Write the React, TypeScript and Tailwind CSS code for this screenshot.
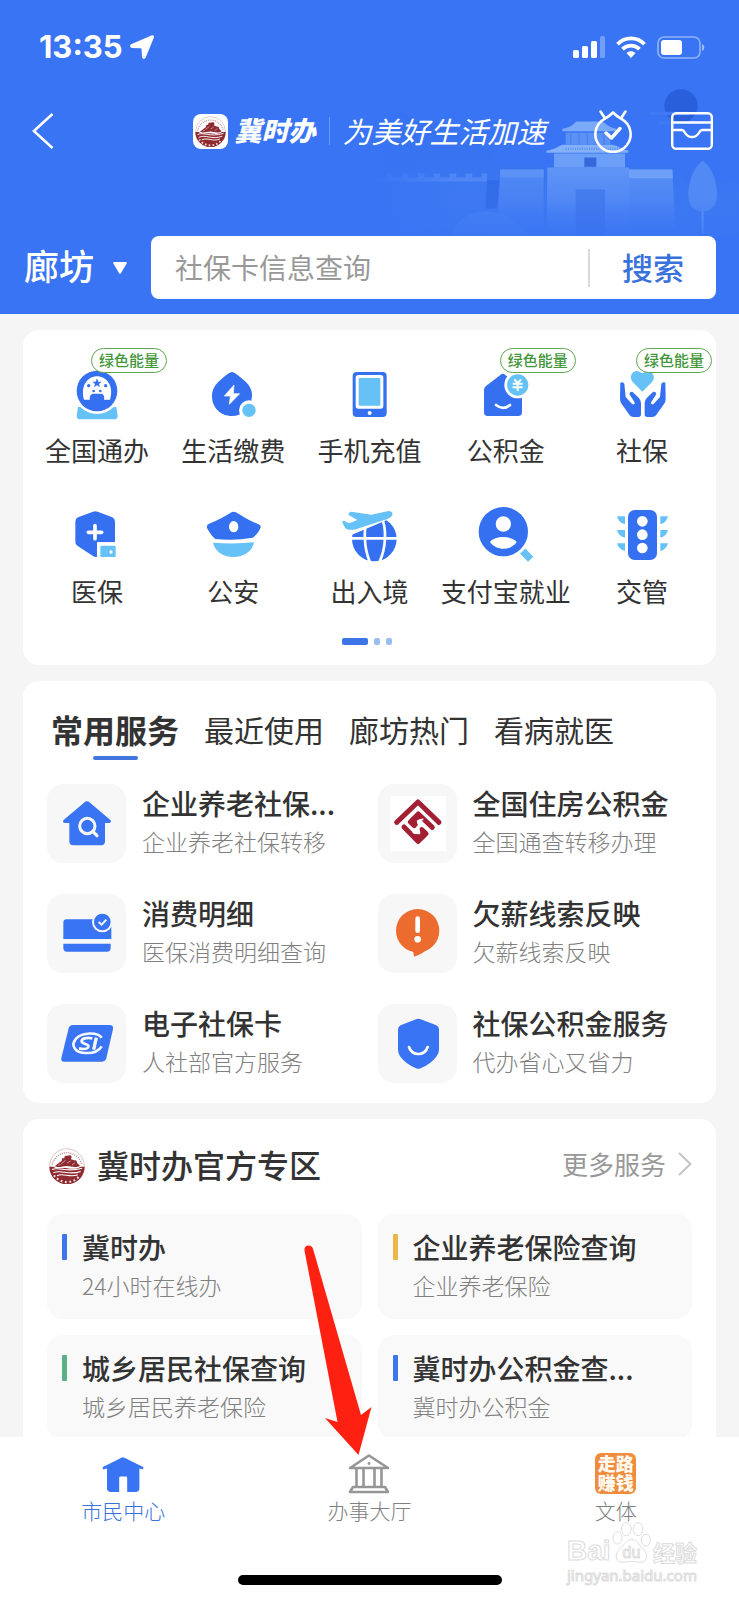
import React from 'react';

const BLUE = '#3470f0';
const SKY = '#66c1f7';

const Seal: React.FC<{ className?: string }> = ({ className }) => (
  <svg viewBox="0 0 100 100" className={className} aria-hidden="true">
    <circle cx="50" cy="50" r="48" fill="#fff" stroke="#cfaeb0" strokeWidth="2" />
    <path d="M9 46 A42 42 0 0 1 91 46" fill="none" stroke="#c09497" strokeWidth="4" strokeDasharray="3 3" />
    <path d="M1 52 A49 49 0 0 0 99 52 L88 52 C76 60 62 58 50 56 C36 54 22 60 12 52 Z" fill="#8e2a30" />
    <path d="M16 51 L27 42 L35 36 L37 28 L42 29 L44 22 L60 20 L63 25 L61 31 L70 34 L76 35 L79 43 L86 49 C74 57 60 50 50 50 C38 50 28 56 16 51 Z" fill="#8e2a30" />
    <path d="M34 44 L46 34 M50 42 L60 36 M64 47 L72 41 M26 48 L32 46" stroke="#e9cdce" strokeWidth="2" fill="none" />
    <path d="M8 60 C28 50 48 70 92 56 M12 69 C34 58 54 78 88 65 M22 77 C40 68 58 84 80 74" stroke="#fff" strokeWidth="3" fill="none" />
    <path d="M14 76 A44 44 0 0 0 86 76" stroke="#f1dcdc" strokeWidth="6" strokeDasharray="5 7" fill="none" />
  </svg>
);

const Skyline = () => (
  <svg viewBox="0 240 1110 470" className="absolute right-0 top-20 h-[157px] w-[370px]" aria-hidden="true">
    <defs>
      <linearGradient id="hill" x1="0" y1="0" x2="0" y2="1">
        <stop offset="0" stopColor="#3069ea" />
        <stop offset="1" stopColor="#4a83f5" />
      </linearGradient>
      <linearGradient id="wall" x1="0" y1="0" x2="0" y2="1">
        <stop offset="0" stopColor="#5f95f6" />
        <stop offset="1" stopColor="#4079f3" />
      </linearGradient>
      <linearGradient id="fade" x1="0" y1="0" x2="1" y2="0">
        <stop offset="0" stopColor="#3874f3" />
        <stop offset="1" stopColor="#3874f3" stopOpacity="0" />
      </linearGradient>
      <linearGradient id="ground" x1="0" y1="0" x2="0" y2="1">
        <stop offset="0" stopColor="#3874f3" stopOpacity="0" />
        <stop offset="1" stopColor="#3874f3" />
      </linearGradient>
    </defs>
    <circle cx="936" cy="317" r="50" fill="#2a5fdc" />
    <path d="M840 340 H960 M870 368 H930" stroke="#3f79f4" strokeWidth="11" />
    <path d="M0 400 C30 330 110 310 150 370 C210 350 250 380 290 420 C330 400 360 440 390 500 H920 L960 560 C1010 530 1070 540 1110 550 V710 H0 Z" fill="url(#hill)" opacity="0.45" />
    <path d="M0 522 H14 V532 H50 V520 H68 V532 H98 V520 H118 V532 H146 V520 H166 V532 H194 V520 H214 V532 H242 V520 H262 V532 H290 V520 H310 V532 H338 V520 H354 V545 H0 Z" fill="#5087f5" />
    <path d="M0 545 H354 V710 H0 Z" fill="#4079f3" opacity="0.6" />
    <path d="M354 540 H392 L384 625 H350 Z" fill="#2f68e6" opacity="0.7" />
    <path d="M394 508 H524 V710 H384 Z" fill="url(#wall)" opacity="0.6" />
    <path d="M394 508 H524 V532 H392 Z" fill="#6599f6" opacity="0.6" />
    <path d="M270 665 C320 615 420 620 480 710 H240 Z" fill="#4a82f5" opacity="0.8" />
    <path d="M0 630 C40 640 60 670 70 710 H0 Z" fill="#3e78f3" />
    <path d="M780 508 H910 L920 710 H780 Z" fill="url(#wall)" opacity="0.8" />
    <path d="M780 508 H910 L912 534 H780 Z" fill="#74a5f8" opacity="0.8" />
    <path d="M535 502 H780 V710 H533 Z" fill="url(#wall)" />
    <path d="M620 568 H708 V710 H620 Z" fill="#3a72e8" opacity="0.6" />
    <path d="M555 460 H768 V502 H555 Z" fill="#6c9ff7" />
    <path d="M646 472 H682 V500 H646 Z" fill="#3668dc" />
    <path d="M532 452 C560 448 572 436 580 434 H730 C745 436 758 448 778 451 V458 H532 Z" fill="#83b0f9" />
    <path d="M590 398 H724 V434 H590 Z" fill="#5b90f4" />
    <path d="M580 386 C604 382 614 372 622 364 H700 C712 372 722 382 742 386 V393 H580 Z" fill="#7baaf8" />
    <path d="M605 434 V400 M630 434 V400 M655 434 V400 M680 434 V400 M705 434 V400" stroke="#4b82f0" strokeWidth="4" />
    <path d="M590 446 H765" stroke="#5d92f2" strokeWidth="7" strokeDasharray="3 4" />
    <path d="M1001 482 C1030 500 1046 550 1044 590 C1042 622 1022 634 1001 634 C978 634 960 620 958 590 C956 550 974 500 1001 482 Z" fill="#5189f5" />
    <path d="M1001 632 V700" stroke="#5f95f6" strokeWidth="6" />
    <rect y="240" width="260" height="470" fill="url(#fade)" />
    <rect y="600" width="1110" height="110" fill="url(#ground)" opacity="0.7" />
  </svg>
);

const StatusBar = () => (
  <div className="flex h-[94px] items-center justify-between pl-[39px] pr-[34px] text-white">
    <div className="flex items-center gap-[7px]">
      <span className="font-['Inter'] text-[31px] font-bold leading-9">13:35</span>
      <svg viewBox="0 0 24 24" className="h-6 w-6" fill="currentColor" aria-hidden="true">
        <path d="M21.4 0.4 C23.3 -0.2 24.4 1 23.8 2.8 L15.8 22.2 C15 24.5 12.2 24.3 12 22 L11.6 14.4 Q11.5 13.3 10.4 13.2 L2 12.9 C-0.3 12.6 -0.6 9.8 1.7 9 Z" />
      </svg>
    </div>
    <div className="flex items-center gap-[11px]">
      <svg viewBox="0 0 32 22" className="h-[22px] w-8" fill="currentColor" aria-hidden="true">
        <rect x="0" y="14" width="6" height="8" rx="1.6" />
        <rect x="9" y="10" width="6" height="12" rx="1.6" />
        <rect x="18" y="5" width="6" height="17" rx="1.6" />
        <rect x="27" y="0" width="5" height="22" rx="1.6" opacity="0.3" />
      </svg>
      <svg viewBox="0 0 30 22" className="h-[22px] w-[30px]" aria-hidden="true">
        <g fill="none" stroke="currentColor" strokeWidth="3.8">
          <path d="M1.5 8.2 C9 0.4 21 0.4 28.5 8.2" />
          <path d="M6.5 13.2 C11.5 8.4 18.5 8.4 23.5 13.2" />
        </g>
        <path d="M10.5 17 C13 14.7 17 14.7 19.5 17 L15 22 Z" fill="currentColor" />
      </svg>
      <svg viewBox="0 0 48 23" className="h-[23px] w-12" aria-hidden="true">
        <rect x="1" y="1" width="42" height="21" rx="6" fill="none" stroke="currentColor" strokeWidth="1.6" opacity="0.45" />
        <rect x="4" y="4" width="21" height="15" rx="3" fill="currentColor" />
        <path d="M45 8 C48 9 48 14 45 15 Z" fill="currentColor" opacity="0.5" />
      </svg>
    </div>
  </div>
);

const Header = () => (
  <header className="relative bg-[#3874f3] pb-[15px] text-white">
    <Skyline />
    <div className="relative">
      <StatusBar />
      <div className="grid h-[74px] grid-cols-[1fr_auto_1fr] items-center">
        <button aria-label="返回" className="ml-8 w-[22px]">
          <svg viewBox="0 0 22 36" className="h-9 w-[22px]" fill="none" stroke="currentColor" strokeWidth="2.6">
            <path d="M20.5 1 L1.8 18 L20.5 35" />
          </svg>
        </button>
        <div className="flex items-center">
          <span className="rounded-lg bg-white p-[2px]">
            <Seal className="h-[31px] w-[31px]" />
          </span>
          <span className="ml-[6px] pb-[2px] text-[27px] font-black italic leading-9">冀时办</span>
          <span className="ml-[14px] mr-3 h-7 w-px bg-[#6f9bf6]" />
          <span className="pb-[2px] text-[29px] italic leading-9">为美好生活加速</span>
        </div>
        <div className="flex items-center justify-end gap-[38px] pr-[26px]">
          <button aria-label="任务">
            <svg viewBox="0 0 40 44" className="h-11 w-10" fill="none" stroke="currentColor" strokeWidth="2.6" strokeLinecap="round" strokeLinejoin="round">
              <path d="M20 3.5 C17 6.5 14.6 8.2 11.6 9.8 A17.6 17.6 0 1 0 28.4 9.8 C25.4 8.2 23 6.5 20 3.5 Z" />
              <path d="M7.5 2.5 L11.5 8.5 M32.5 2.5 L28.5 8.5" />
              <path d="M13 24 L18.5 29 L27 19.5" strokeWidth="3.4" />
            </svg>
          </button>
          <button aria-label="卡包">
            <svg viewBox="0 0 42 38" className="h-[38px] w-[42px]" fill="none" stroke="currentColor" strokeWidth="2.4" strokeLinejoin="round">
              <rect x="1.2" y="1.2" width="39.6" height="35.6" rx="4" />
              <path d="M1.2 10.5 H40.8 M1.2 18 H11 C14.5 18 13.5 25 21 25 C28.5 25 27.5 18 31 18 H40.8" />
            </svg>
          </button>
        </div>
      </div>
      <div className="mr-[23px] mt-[68px] flex h-[63px] items-center pl-6">
        <label className="relative flex items-center">
          <select aria-label="城市" className="w-[103px] appearance-none bg-transparent pb-[6px] text-[35px] font-medium leading-[50px] outline-none">
            <option>廊坊</option>
          </select>
          <svg viewBox="0 0 14 12" className="pointer-events-none absolute right-0 h-3 w-[14px]" fill="currentColor">
            <path d="M0.8 0 H13.2 Q14.2 0.3 13.6 1.4 L7.9 11.2 Q7 12.4 6.1 11.2 L0.4 1.4 Q-0.2 0.3 0.8 0 Z" />
          </svg>
        </label>
        <form className="ml-6 flex h-full min-w-0 flex-1 items-center rounded-lg bg-white" onSubmit={(e) => e.preventDefault()}>
          <input
            type="search"
            aria-label="搜索服务"
            placeholder="社保卡信息查询"
            className="h-full min-w-0 flex-1 bg-transparent pb-[2px] pl-6 text-[28px] text-[#333] outline-none placeholder:text-[#999]"
          />
          <span className="h-[38px] w-[2px] bg-[#d9d9d9]" />
          <button className="w-[126px] pb-[2px] text-[31px] font-medium leading-[44px] text-[#3a72dc]">搜索</button>
        </form>
      </div>
    </div>
  </header>
);

const quickServices = [
  {
    name: '全国通办',
    green: true,
    icon: (
      <svg viewBox="141 114 180 180">
        <path d="M174 246 H289 L293 272 Q293 283 282 283 H181 Q170 283 170 272 Z" fill={SKY} />
        <circle cx="231" cy="198" r="69" fill="#fff" />
        <circle cx="231" cy="198" r="61" fill={BLUE} />
        <path d="M192 224 C180 180 205 154 231 154 C257 154 284 180 270 224 H252 C254 216 252 208 244 206 H220 C210 208 208 216 210 224 Z" fill="#fff" />
        <path d="M231 160 L235 170 L245 170 L237 177 L240 187 L231 181 L222 187 L225 177 L217 170 L227 170 Z" fill={BLUE} />
        <circle cx="206" cy="182" r="5" fill={BLUE} />
        <circle cx="257" cy="182" r="5" fill={BLUE} />
        <circle cx="221" cy="198" r="4" fill={BLUE} />
        <circle cx="241" cy="198" r="4" fill={BLUE} />
      </svg>
    ),
  },
  {
    name: '生活缴费',
    icon: (
      <svg viewBox="549 114 180 180">
        <path d="M636 141 C642 141 655 151 672 166 C688 180 697 194 696 213 C694 250 668 273 636 273 C602 273 576 248 576 213 C576 192 586 178 602 164 C618 150 630 141 636 141 Z" fill={BLUE} />
        <path d="M642 180 L613 213 H631 L628 238 L659 206 H640 Z" fill="#fff" stroke="#fff" strokeWidth="2" strokeLinejoin="round" />
        <circle cx="687" cy="256" r="30" fill="#fff" />
        <circle cx="687" cy="256" r="20" fill={SKY} />
      </svg>
    ),
  },
  {
    name: '手机充值',
    icon: (
      <svg viewBox="957 114 180 180">
        <rect x="998" y="141" width="102" height="135" rx="12" fill={BLUE} />
        <rect x="1007" y="150" width="83" height="101" rx="8" fill="#fff" />
        <rect x="1016" y="159" width="65" height="83" rx="3" fill={SKY} />
        <circle cx="1049" cy="264" r="6" fill="#fff" />
      </svg>
    ),
  },
  {
    name: '公积金',
    green: true,
    icon: (
      <svg viewBox="318 114 180 180">
        <path d="M402 147 L456 190 V262 Q456 273 445 273 H353 Q342 273 342 262 V194 Q342 188 348 183 L392 149 Q397 145 402 147 Z" fill={BLUE} />
        <path d="M378 240 Q400 257 420 240" fill="none" stroke="#fff" strokeWidth="8" strokeLinecap="round" />
        <circle cx="443" cy="180" r="40" fill="#fff" />
        <circle cx="443" cy="180" r="32" fill={SKY} />
        <path d="M433 163 L443 174 L453 163 M443 174 V198 M428 176 H458 M428 187 H458" fill="none" stroke="#fff" strokeWidth="6" />
      </svg>
    ),
  },
  {
    name: '社保',
    green: true,
    icon: (
      <svg viewBox="726 114 180 180">
        <path d="M817 200 L788 171 C774 155 790 132 808 140 L817 145 L827 140 C846 133 860 155 846 171 Z" fill={SKY} />
        <path id="palm" d="M751 173 Q757 169 763 176 L767 216 L784 235 Q790 242 795 234 L778 207 Q779 199 787 200 L806 218 Q813 225 813 234 V268 Q813 276 805 276 H790 Q783 276 779 271 L755 237 Q750 230 750 222 Z" fill={BLUE} />
        <use href="#palm" transform="matrix(-1 0 0 1 1637 0)" />
      </svg>
    ),
  },
  {
    name: '医保',
    icon: (
      <svg viewBox="141 537 180 180">
        <path d="M219 560 Q226 557 233 560 L277 577 Q285 581 285 590 V652 H231 V695 Q225 697 219 693 L172 662 Q166 658 166 650 V590 Q166 581 174 577 Z" fill={BLUE} />
        <path d="M225 602 V641 M205 622 H245" stroke="#fff" strokeWidth="11" strokeLinecap="round" />
        <path d="M232 652 H290 V700 H232 Z" fill="#fff" />
        <rect x="241" y="662" width="46" height="34" rx="3" fill={SKY} />
        <circle cx="273" cy="681" r="5" fill="#fff" />
      </svg>
    ),
  },
  {
    name: '公安',
    icon: (
      <svg viewBox="549 537 180 180">
        <path d="M632 563 Q641 558 650 563 C672 576 688 586 716 598 Q725 603 721 610 C712 628 705 633 698 638 Q642 648 586 642 C574 632 568 622 561 609 Q559 600 566 597 C594 585 612 575 632 563 Z" fill={BLUE} />
        <ellipse cx="641" cy="605" rx="14" ry="17" fill="#fff" />
        <path d="M579 653 Q641 658 702 652 C698 680 670 696 641 696 C612 696 586 682 579 653 Z" fill={SKY} />
      </svg>
    ),
  },
  {
    name: '出入境',
    icon: (
      <svg viewBox="957 537 180 180">
        <circle cx="1063" cy="642" r="67" fill={BLUE} />
        <g fill="none" stroke="#fff" strokeWidth="8">
          <path d="M1046 570 C1028 610 1032 670 1050 712 M1082 570 C1102 610 1098 670 1078 712 M990 640 H1136" />
        </g>
        <path d="M950 560 L1050 530 H1110 L1136 570 L1060 602 L985 634 L950 610 Z" fill="#fff" />
        <path d="M966 590 Q972 583 980 592 Q986 597 996 592 L1012 585 L986 570 Q984 562 994 560 L1054 569 L1106 558 Q1122 560 1116 572 Q1110 580 1090 586 L1010 612 Q984 618 976 610 Z" fill={SKY} />
      </svg>
    ),
  },
  {
    name: '支付宝就业',
    icon: (
      <svg viewBox="318 537 180 180">
        <path d="M458 678 L482 703" stroke={SKY} strokeWidth="22" />
        <circle cx="400" cy="620" r="82" fill="#fff" />
        <circle cx="400" cy="620" r="74" fill={BLUE} />
        <circle cx="400" cy="597" r="23" fill="#fff" />
        <path d="M360 651 C374 631 426 631 440 651 C422 678 378 678 360 651 Z" fill="#fff" />
      </svg>
    ),
  },
  {
    name: '交管',
    icon: (
      <svg viewBox="726 537 180 180">
        <rect x="774" y="555" width="87" height="150" rx="20" fill={BLUE} />
        <circle cx="817" cy="589" r="16" fill="#fff" />
        <circle cx="817" cy="629" r="16" fill="#fff" />
        <circle cx="817" cy="669" r="16" fill="#fff" />
        <g fill={SKY}>
          <path d="M741 574 H765 V598 Q746 594 741 574 Z M741 615 H765 V638 Q746 634 741 615 Z M741 655 H765 V678 Q746 674 741 655 Z" />
          <path d="M894 574 H871 V598 Q889 594 894 574 Z M894 615 H871 V638 Q889 634 894 615 Z M894 655 H871 V678 Q889 674 894 655 Z" />
        </g>
      </svg>
    ),
  },
];

const QuickServices = () => (
  <section className="rounded-2xl bg-white px-[6px] pb-5 pt-[33px]">
    <div className="grid grid-cols-5 gap-y-9">
      {quickServices.map((item) => (
        <button key={item.name} className="flex flex-col items-center">
          <span className="relative block w-[60px]">
            {item.icon}
            {item.green && (
              <span className="absolute -top-[15px] left-6 whitespace-nowrap rounded-full border border-[#5fa552] bg-white px-[7px] pb-px text-[15px] font-medium leading-[22px] text-[#43963a]">
                绿色能量
              </span>
            )}
          </span>
          <span className="mt-[9px] whitespace-nowrap text-[26px] leading-9 text-[#333]">{item.name}</span>
        </button>
      ))}
    </div>
    <div className="mt-[29px] flex justify-center gap-[6px] pr-[6px]">
      <span className="h-[7px] w-[26px] rounded-[2px] bg-[#3d74e6]" />
      <span className="h-[7px] w-[6px] rounded-[2px] bg-[#9dbcf0]" />
      <span className="h-[7px] w-[6px] rounded-[2px] bg-[#9dbcf0]" />
    </div>
  </section>
);

const commonServices = [
  {
    title: '企业养老社保...',
    desc: '企业养老社保转移',
    icon: (
      <svg viewBox="80 311 237 237">
        <path d="M191 367 Q200 359 209 367 L271 420 Q274 428 266 428 H254 V483 Q254 495 242 495 H159 Q147 495 147 483 V428 H134 Q126 428 129 420 Z" fill="#3874f3" />
        <circle cx="201" cy="437" r="23" fill="none" stroke="#f7f7f7" strokeWidth="9" />
        <path d="M218 454 L230 466" stroke="#f7f7f7" strokeWidth="10" strokeLinecap="round" />
      </svg>
    ),
  },
  {
    title: '全国住房公积金',
    desc: '全国通查转移办理',
    icon: (
      <svg viewBox="-24 -18 237 237">
        <rect x="13" y="18" width="167" height="166" fill="#fff" />
        <g fill="none" stroke="#a31f34" strokeWidth="15" strokeLinecap="round" strokeLinejoin="round">
          <path d="M32 97 L96 36 L159 97" />
          <path d="M139 112 L97 72 L73 96 L85 107" />
          <path d="M54 111 L96 154 L120 131 L107 119" />
        </g>
        <path d="M97 66 L112 84 L92 92 L96 106 L86 112 L70 96 Z" fill="#a31f34" />
        <path d="M96 160 L84 132 L102 133 L106 112 L124 131 Z" fill="#a31f34" />
        <path d="M112 88 C100 88 92 94 99 103 M80 126 C94 134 104 126 97 116" fill="none" stroke="#fff" strokeWidth="5" />
      </svg>
    ),
  },
  {
    title: '消费明细',
    desc: '医保消费明细查询',
    icon: (
      <svg viewBox="80 643 237 237">
        <path d="M139 719 H273 V778 H129 V729 Q129 719 139 719 Z M129 792 H271 V805 Q271 816 260 816 H140 Q129 816 129 805 Z" fill="#3874f3" />
        <circle cx="246" cy="727" r="31" fill="#f7f7f7" />
        <circle cx="246" cy="727" r="25" fill="#3874f3" />
        <path d="M235 727 L244 735 L258 720" fill="none" stroke="#f7f7f7" strokeWidth="6" />
      </svg>
    ),
  },
  {
    title: '欠薪线索反映',
    desc: '欠薪线索反映',
    icon: (
      <svg viewBox="24 643 237 237">
        <circle cx="143" cy="753" r="65" fill="#ec6c30" />
        <path d="M129 812 L132 831 Q160 824 180 800 Z" fill="#ec6c30" />
        <path d="M143 717 V753" stroke="#fff" strokeWidth="14" strokeLinecap="round" />
        <circle cx="143" cy="779" r="10" fill="#fff" />
      </svg>
    ),
  },
  {
    title: '电子社保卡',
    desc: '人社部官方服务',
    icon: (
      <svg viewBox="80 975 237 237">
        <path d="M158 1038 H268 Q280 1038 278 1050 L258 1138 Q255 1148 245 1148 H131 Q121 1148 123 1137 L145 1048 Q148 1038 158 1038 Z" fill="#3874f3" />
        <path d="M244 1076 C232 1058 186 1060 168 1078 C148 1100 166 1122 196 1122 C222 1123 238 1112 244 1102" fill="none" stroke="#f4f8ff" strokeWidth="8" />
        <path d="M216 1078 C200 1074 182 1079 184 1088 C186 1096 208 1094 204 1104 C200 1112 184 1110 176 1108" fill="none" stroke="#f4f8ff" strokeWidth="8" />
        <path d="M228 1076 L220 1112" fill="none" stroke="#f4f8ff" strokeWidth="10" />
      </svg>
    ),
  },
  {
    title: '社保公积金服务',
    desc: '代办省心又省力',
    icon: (
      <svg viewBox="24 975 237 237">
        <path d="M138 1021 Q145 1018 152 1021 L199 1039 Q207 1043 207 1051 V1112 Q207 1122 200 1132 Q182 1156 152 1168 Q145 1171 138 1168 Q108 1156 90 1132 Q84 1122 84 1112 V1051 Q84 1043 92 1039 Z" fill="#3874f3" />
        <path d="M117 1104 C126 1132 164 1132 173 1104" fill="none" stroke="#fff" strokeWidth="8" strokeLinecap="round" />
      </svg>
    ),
  },
];

const CommonServices = () => (
  <section className="rounded-2xl bg-white px-6 pb-5 pt-7">
    <div role="tablist" className="flex gap-[25px] pl-1 text-[30px] leading-10 text-[#333]">
      <button role="tab" aria-selected="true" className="flex h-[51px] flex-col items-center justify-between text-[32px] font-bold">
        常用服务
        <span className="h-1 w-[45px] rounded-full bg-[#3f75dc]" />
      </button>
      {['最近使用', '廊坊热门', '看病就医'].map((tab) => (
        <button key={tab} role="tab" aria-selected="false" className="h-10">
          {tab}
        </button>
      ))}
    </div>
    <div className="mt-6 grid grid-cols-2 gap-x-4 gap-y-[31px]">
      {commonServices.map((item) => (
        <a key={item.title} href="#" className="flex gap-4">
          <span className="h-[79px] w-[79px] shrink-0 overflow-hidden rounded-2xl bg-[#f7f7f7]">{item.icon}</span>
          <span className="min-w-0 whitespace-nowrap">
            <span className="block text-[28px] font-medium leading-[38px] text-[#333]">{item.title}</span>
            <span className="block text-[23px] font-light leading-[38px] text-[#808080]">{item.desc}</span>
          </span>
        </a>
      ))}
    </div>
  </section>
);

const zoneItems = [
  { title: '冀时办', desc: '24小时在线办', bar: 'bg-[#3f75ea]' },
  { title: '企业养老保险查询', desc: '企业养老保险', bar: 'bg-[#e8b84a]' },
  { title: '城乡居民社保查询', desc: '城乡居民养老保险', bar: 'bg-[#5cb085]' },
  { title: '冀时办公积金查...', desc: '冀时办公积金', bar: 'bg-[#3f75ea]' },
];

const OfficialZone = () => (
  <section className="rounded-t-2xl bg-white px-6 pb-6 pt-[23px]">
    <div className="flex h-12 items-center">
      <Seal className="ml-[2px] h-9 w-9" />
      <h2 className="ml-3 pb-1 text-[32px] font-medium leading-[44px] text-[#333]">冀时办官方专区</h2>
      <a href="#" className="ml-auto flex items-center gap-3 pb-1 text-[26px] leading-9 text-[#999]">
        更多服务
        <svg viewBox="0 0 14 24" className="h-6 w-[14px]" fill="none" stroke="#c4c4c4" strokeWidth="2">
          <path d="M1 1 L12.5 12 L1 23" />
        </svg>
      </a>
    </div>
    <div className="mt-6 grid grid-cols-2 gap-4">
      {zoneItems.map((item) => (
        <a key={item.title} href="#" className="whitespace-nowrap rounded-2xl bg-[#f9f9f9] pb-4 pl-[15px] pt-[13px]">
          <span className="flex items-center gap-[15px] text-[28px] font-medium leading-10 text-[#333]">
            <span className={`h-[26px] w-[5px] rounded-[1px] ${item.bar}`} />
            {item.title}
          </span>
          <span className="block pl-5 text-[23px] font-light leading-9 text-[#808080]">{item.desc}</span>
        </a>
      ))}
    </div>
  </section>
);

const Watermark = () => (
  <div className="absolute right-10 top-[84px] w-[132px] text-white [-webkit-text-stroke:1px_#dcdcdc]" aria-hidden="true">
    <div className="flex h-[42px] items-end">
      <span className="w-[45px] font-['Liberation_Sans'] text-[28px] font-bold leading-6">Bai</span>
      <span className="relative w-[39px]">
        <svg viewBox="0 0 120 126" fill="#fff" stroke="#dcdcdc" strokeWidth="3">
          <ellipse cx="17" cy="49" rx="14" ry="19" />
          <ellipse cx="44" cy="22" rx="15" ry="20" />
          <ellipse cx="80" cy="22" rx="15" ry="20" />
          <ellipse cx="104" cy="56" rx="14" ry="18" />
          <path d="M60 54 C78 54 82 72 96 84 C112 98 110 124 88 124 C76 124 70 121 60 121 C50 121 44 124 32 124 C8 124 8 98 24 84 C38 72 42 54 60 54 Z" />
        </svg>
        <span className="absolute inset-x-0 bottom-[2px] text-center font-['Liberation_Sans'] text-[16px] leading-4">du</span>
      </span>
      <span className="ml-[2px] text-[22px] font-bold leading-6">经验</span>
    </div>
    <div className="mt-[2px] font-['Noto_Sans'] text-[15px] leading-5">jingyan.baidu.com</div>
  </div>
);

const TabBar = () => (
  <footer className="relative shrink-0 bg-white pb-[15px] pt-4">
    <nav className="grid grid-cols-3 text-[21px] font-light leading-[26px] text-[#808080]">
      <a href="#" className="flex flex-col items-center text-[#3a72dc]">
        <svg viewBox="0 0 44 44" className="h-11 w-11" fill="#3874f3" aria-hidden="true">
          <path d="M20.5 4.8 Q22 3.8 23.5 4.8 L42.6 14.2 L41.8 16.4 L38.4 15.6 V35 Q38.4 39 34.4 39 H26.2 V25 Q26.2 23.6 24.8 23.6 H19.6 Q18.2 23.6 18.2 25 V39 H10 Q6 39 6 35 V15.6 L2.2 16.4 L1.4 14.2 Z" />
        </svg>
        市民中心
      </a>
      <a href="#" className="flex flex-col items-center">
        <svg viewBox="0 0 44 44" className="h-11 w-11" fill="none" stroke="#969696" strokeWidth="2.6" strokeLinejoin="round" aria-hidden="true">
          <path d="M22 2.5 L41 15 H3 Z" />
          <path d="M9.5 16 V34 M16.5 16 V34 M27.5 16 V34 M34.5 16 V34" />
          <path d="M6 34 H38 L41 39 H3 Z" />
          <circle cx="22" cy="10.5" r="1.4" fill="#969696" stroke="none" />
        </svg>
        办事大厅
      </a>
      <a href="#" className="flex flex-col items-center">
        <span className="mb-[3px] grid h-[41px] w-[41px] content-center justify-center rounded-md bg-[#f08c3e] pb-[2px] text-[18px] font-black leading-[19px] text-[#fffaf0]">
          <span>走路</span>
          <span>赚钱</span>
        </span>
        文体
      </a>
    </nav>
    <div className="mx-auto mt-[52px] h-[10px] w-[264px] rounded-full bg-black" />
    <Watermark />
  </footer>
);

const App: React.FC = () => {
  return (
    <div className="relative flex h-screen flex-col overflow-hidden bg-[#f5f5f5] font-['Noto_Sans_CJK_SC',sans-serif]">
      <Header />
      <main className="flex min-h-0 flex-1 flex-col gap-4 overflow-hidden px-[23px] pt-4">
        <QuickServices />
        <CommonServices />
        <OfficialZone />
      </main>
      <TabBar />
      {/* pointer to the service hall tab */}
      <svg viewBox="0 0 48 210" className="pointer-events-none absolute bottom-[145px] left-1/2 -ml-[66px] h-[210px] w-12 overflow-visible" fill="#fe2011" aria-hidden="true">
        <path d="M0.5 5.5 Q0 0.8 4.5 0.5 Q8.3 0.5 9.2 4.5 L57 170 L67.5 162 L54.5 210 L21 173 L33.5 177 Z" />
      </svg>
    </div>
  );
};

export default App;
